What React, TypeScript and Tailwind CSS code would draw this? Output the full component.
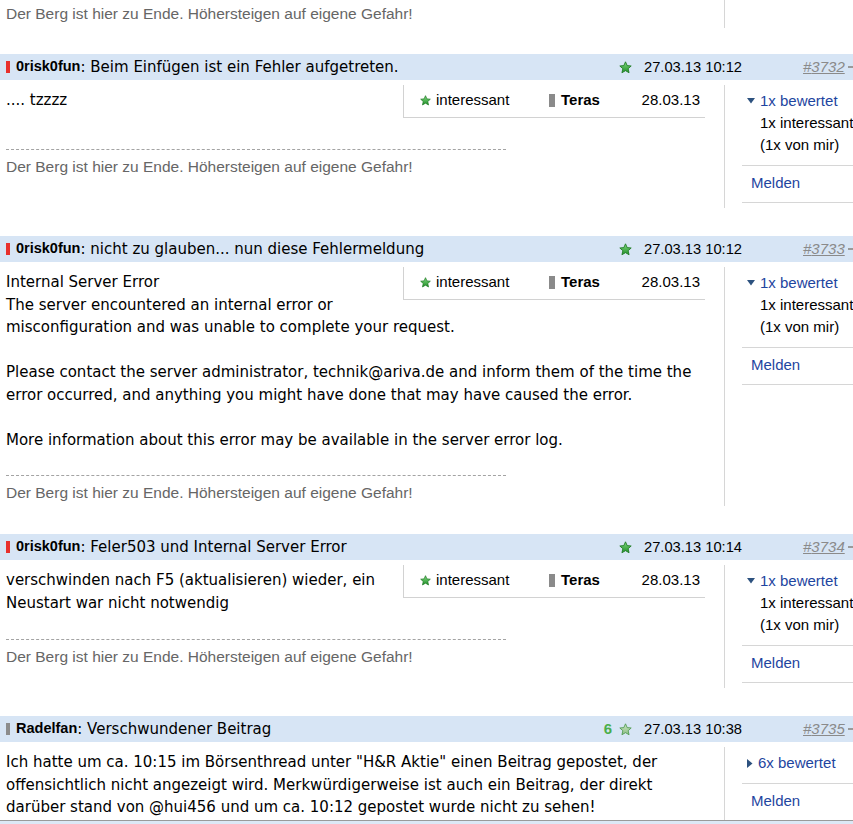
import React from "react";

const verdana = "font-['DejaVu_Sans',Verdana,sans-serif]";
const arial = "font-['Liberation_Sans',Arial,sans-serif]";

function Star(props: { size: number; pale?: boolean }) {
    return (
        <svg width={props.size} height={props.size} viewBox="0 0 24 24" className="shrink-0">
            <defs>
                <linearGradient id={props.pale ? "sp" : "sg"} x1="0" y1="0" x2="0" y2="1">
                    <stop offset="0" stopColor={props.pale ? "#c8e4c0" : "#7fd87f"} />
                    <stop offset="1" stopColor={props.pale ? "#8fbf86" : "#23902a"} />
                </linearGradient>
            </defs>
            <path
                d="M12 1.5l3.1 7 7.4.7-5.6 5 1.7 7.5L12 17.8l-6.6 3.9 1.7-7.5-5.6-5 7.4-.7z"
                fill={props.pale ? "url(#sp)" : "url(#sg)"}
                stroke={props.pale ? "#4f9a4f" : "#1d7a22"}
                strokeWidth="1.6"
                strokeLinejoin="round"
            />
        </svg>
    );
}

function PostHeader(props: { user: string; marker: string; title: string; date: string; num: string; count?: string }) {
    return (
        <div className="flex h-[26px] items-center bg-[#d7e5f5] text-black">
            <div className="flex flex-1 items-center pl-[6px] whitespace-nowrap">
                <span className={`mr-[6px] h-[12px] w-[4px] ${props.marker}`} />
                <span className={`${arial} text-[14.5px] font-bold`}>{props.user}</span>
                <span className={`${verdana} text-[15px]`}>: {props.title}</span>
            </div>
            <div className="flex w-[280px] items-center whitespace-nowrap">
                <div className="flex w-[32px] items-center justify-end gap-[7px]">
                    {props.count && <span className={`${arial} text-[15px] font-bold text-[#4aae4a]`}>{props.count}</span>}
                    <Star size={13} pale={!!props.count} />
                </div>
                <span className={`${arial} ml-[12px] text-[14.7px]`}>{props.date}</span>
                <span className={`${arial} ml-[61px] text-[15px] italic text-[#8a8a8a] underline`}>#{props.num}</span>
                <span className="ml-[3px] h-[2px] w-[5px] bg-[#9a9a9a]" />
            </div>
        </div>
    );
}

function RatingBox() {
    return (
        <div className={`${arial} float-right flex h-[33px] w-[302px] items-center border-b border-l border-[#d2d2d2] pb-[2px] pl-[16px] pr-[5px] text-[15px] text-black`}>
            <div className="flex w-[129px] items-center gap-[5px]">
                <Star size={11} />
                <span>interessant</span>
            </div>
            <div className="flex flex-1 items-center gap-[6px]">
                <span className="h-[13px] w-[6px] bg-[#8a8a8a]" />
                <span className="font-bold">Teras</span>
            </div>
            <span>28.03.13</span>
        </div>
    );
}

function Signature() {
    return <div className={`${arial} text-[15.5px] leading-[18px] text-[#666]`}>Der Berg ist hier zu Ende. Höhersteigen auf eigene Gefahr!</div>;
}

function Arrow(props: { open: boolean }) {
    return props.open ? (
        <svg width="8" height="6" viewBox="0 0 8 6" className="shrink-0">
            <polygon points="0,0 8,0 4,5.5" fill="#2d527f" />
        </svg>
    ) : (
        <svg width="6" height="9" viewBox="0 0 6 9" className="shrink-0">
            <polygon points="0,0 5.5,4.5 0,9" fill="#2d527f" />
        </svg>
    );
}

function SideColumn(props: { count: string; open: boolean; last?: boolean }) {
    return (
        <div className={`${arial} ${props.last ? "" : "mb-[2px] pb-[5px]"} mt-[5px] flex-1 border-l border-[#d6d6d6] pl-[17px] pt-[5px] text-[15px] leading-[22px]`}>
            <div className="flex items-center gap-[5px] pl-[5px] text-[#1e45a0]">
                <Arrow open={props.open} />
                <span>{props.count}x bewertet</span>
            </div>
            {props.open && (
                <div className="pl-[18px] text-black whitespace-nowrap">
                    <div>1x interessant</div>
                    <div>(1x von mir)</div>
                </div>
            )}
            <div className="mt-[9px] border-t border-[#d6d6d6] pb-[8px] pl-[9px] pt-[6px] text-[#1e45a0]">Melden</div>
            {!props.last && <div className="border-t border-[#d6d6d6]" />}
        </div>
    );
}

function Post(props: {
    user: string;
    marker: string;
    title: string;
    date: string;
    num: string;
    count?: string;
    rated: string;
    open: boolean;
    rating?: boolean;
    dashMt?: string;
    sig?: boolean;
    last?: boolean;
    children: React.ReactNode;
}) {
    return (
        <div className={props.last ? "" : "mb-[26px]"}>
            <PostHeader user={props.user} marker={props.marker} title={props.title} date={props.date} num={props.num} count={props.count} />
            <div className="flex">
                <div className={`w-[724px] pl-[6px] pr-[19px] pt-[5px] ${props.last ? "" : "pb-[6px]"}`}>
                    {props.rating && <RatingBox />}
                    <div className={`${verdana} pt-[4px] text-[15px] leading-[22.5px] text-black`}>{props.children}</div>
                    <div className="clear-both" />
                    {props.sig && (
                        <>
                            <div className={`${props.dashMt} w-[500px] border-t border-dashed border-[#a3a3a3]`} />
                            <div className="mt-[8px]">
                                <Signature />
                            </div>
                        </>
                    )}
                </div>
                <SideColumn count={props.rated} open={props.open} last={props.last} />
            </div>
        </div>
    );
}

export default function App() {
    return (
        <div className="h-[824px] w-[853px] overflow-hidden bg-white">
            <div className="w-[880px]">
                <div className="mb-[26px] flex">
                    <div className="w-[724px] pb-[5px] pl-[6px] pt-[5px]">
                        <Signature />
                    </div>
                    <div className="flex-1 border-l border-[#d6d6d6]" />
                </div>

                <Post user="0risk0fun" marker="bg-[#e8302c]" title="Beim Einfügen ist ein Fehler aufgetreten." date="27.03.13 10:12" num="3732" rated="1" open rating sig dashMt="mt-[31px]">
                    .... tzzzz
                </Post>

                <Post user="0risk0fun" marker="bg-[#e8302c]" title="nicht zu glauben... nun diese Fehlermeldung" date="27.03.13 10:12" num="3733" rated="1" open rating sig dashMt="mt-[24px]">
                    Internal Server Error
                    <br />
                    The server encountered an internal error or
                    <br />
                    misconfiguration and was unable to complete your request.
                    <br />
                    <br />
                    Please contact the server administrator, technik@ariva.de and inform them of the time the
                    <br />
                    error occurred, and anything you might have done that may have caused the error.
                    <br />
                    <br />
                    More information about this error may be available in the server error log.
                </Post>

                <Post user="0risk0fun" marker="bg-[#e8302c]" title="Feler503 und Internal Server Error" date="27.03.13 10:14" num="3734" rated="1" open rating sig dashMt="mt-[25px]">
                    verschwinden nach F5 (aktualisieren) wieder, ein
                    <br />
                    Neustart war nicht notwendig
                </Post>

                <Post user="Radelfan" marker="bg-[#8c8c8c]" title="Verschwundener Beitrag" date="27.03.13 10:38" num="3735" count="6" rated="6" open={false} last>
                    Ich hatte um ca. 10:15 im Börsenthread unter "H&amp;R Aktie" einen Beitrag gepostet, der
                    <br />
                    offensichtlich nicht angezeigt wird. Merkwürdigerweise ist auch ein Beitrag, der direkt
                    <br />
                    darüber stand von @hui456 und um ca. 10:12 gepostet wurde nicht zu sehen!
                </Post>
                <div className="border-t border-[#9a9a9a]" />
                <div className="h-[10px] bg-[#dce8f6]" />
            </div>
        </div>
    );
}
